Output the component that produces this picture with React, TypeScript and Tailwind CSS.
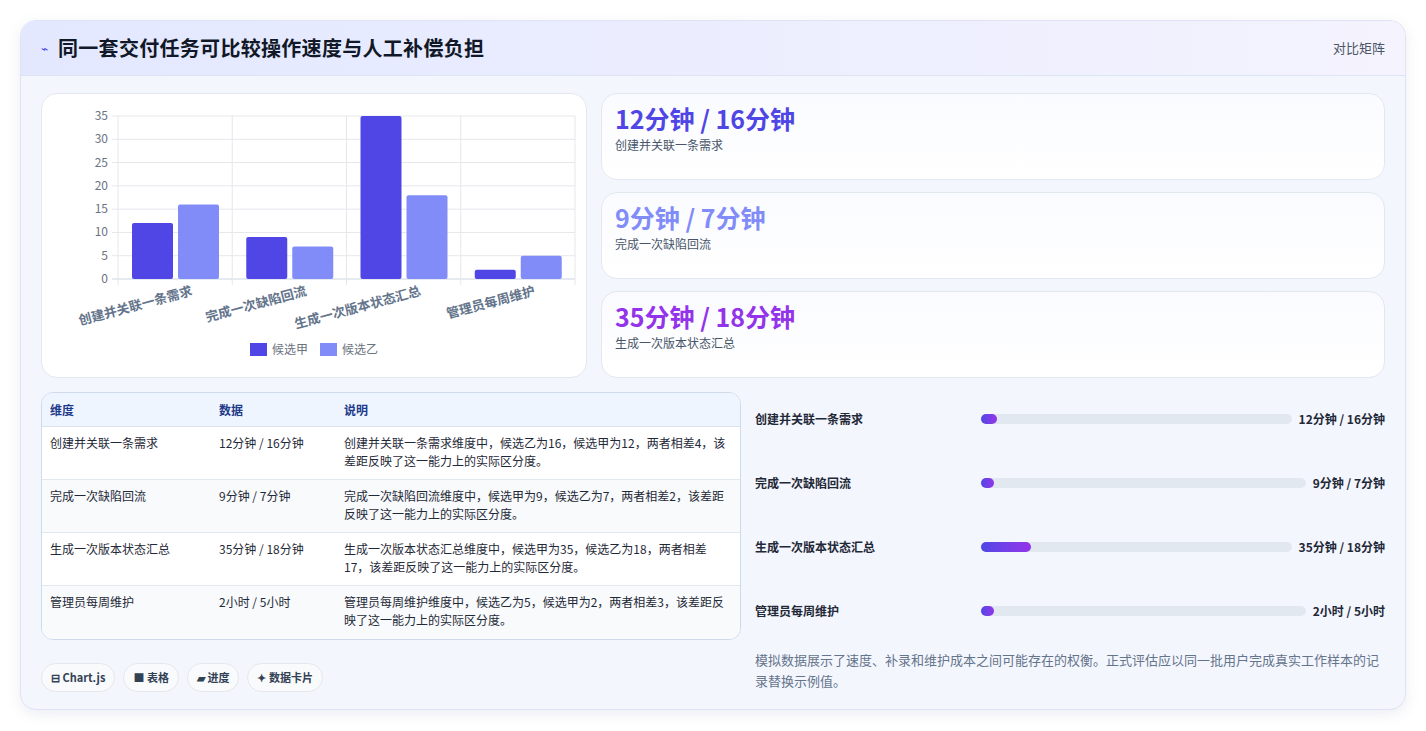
import React from "react";

const F = { fontFamily: '"Noto Sans CJK SC", "Noto Sans", sans-serif' };

const data = [
  { n: "创建并关联一条需求", a: 12, b: 16, d: "12分钟 / 16分钟", t: "创建并关联一条需求维度中，候选乙为16，候选甲为12，两者相差4，该差距反映了这一能力上的实际区分度。", w: 5 },
  { n: "完成一次缺陷回流", a: 9, b: 7, d: "9分钟 / 7分钟", t: "完成一次缺陷回流维度中，候选甲为9，候选乙为7，两者相差2，该差距反映了这一能力上的实际区分度。", w: 4 },
  { n: "生成一次版本状态汇总", a: 35, b: 18, d: "35分钟 / 18分钟", t: "生成一次版本状态汇总维度中，候选甲为35，候选乙为18，两者相差17，该差距反映了这一能力上的实际区分度。", w: 16 },
  { n: "管理员每周维护", a: 2, b: 5, d: "2小时 / 5小时", t: "管理员每周维护维度中，候选乙为5，候选甲为2，两者相差3，该差距反映了这一能力上的实际区分度。", w: 4 },
];

function Chart() {
  const L = 76, R = 533, T = 22, B = 185;
  const y = (v: number) => B - (v / 35) * (B - T);
  const cw = (R - L) / 4;
  return (
    <svg width="546" height="284" style={F}>
      {[0, 5, 10, 15, 20, 25, 30, 35].map((v) => (
        <g key={v}>
          <line x1={L - 6} x2={R} y1={y(v)} y2={y(v)} stroke={v === 0 ? "#cbd5e1" : "#e5e7eb"} />
          <text x={L - 10} y={y(v) + 4} fontSize="12" fill="#6b7280" textAnchor="end">{v}</text>
        </g>
      ))}
      {[0, 1, 2, 3, 4].map((i) => (
        <line key={i} x1={L + i * cw} x2={L + i * cw} y1={T} y2={B + 6} stroke="#e5e7eb" />
      ))}
      {data.map((d, i) => {
        const x0 = L + i * cw + 14;
        return (
          <g key={i}>
            <rect x={x0} y={y(d.a)} width="41" height={B - y(d.a)} rx="2" fill="#4f46e5" />
            <rect x={x0 + 46} y={y(d.b)} width="41" height={B - y(d.b)} rx="2" fill="#818cf8" />
            <text x={L + i * cw + cw / 2 + 18} y={B + 16} fontSize="13" fontWeight="600" fill="#64748b" textAnchor="end" transform={`rotate(-15 ${L + i * cw + cw / 2 + 18} ${B + 16})`}>{d.n}</text>
          </g>
        );
      })}
      <rect x="208" y="249" width="17" height="13" fill="#4f46e5" />
      <text x="230" y="260" fontSize="12" fill="#6b7280">候选甲</text>
      <rect x="278" y="249" width="17" height="13" fill="#818cf8" />
      <text x="300" y="260" fontSize="12" fill="#6b7280">候选乙</text>
    </svg>
  );
}

const metrics = [
  { v: "12分钟 / 16分钟", l: "创建并关联一条需求", c: "text-[#4f46e5]" },
  { v: "9分钟 / 7分钟", l: "完成一次缺陷回流", c: "text-[#818cf8]" },
  { v: "35分钟 / 18分钟", l: "生成一次版本状态汇总", c: "text-[#9333ea]" },
];

export default function App() {
  return (
    <div className="w-[1426px] h-[731px] bg-white p-5" style={F}>
      <div className="h-[690px] rounded-2xl border border-[#dfe3f5] bg-[#f4f6fe] overflow-hidden shadow-[0_4px_14px_rgba(100,110,160,0.12)] flex flex-col">
        <div className="h-[55px] shrink-0 flex items-center justify-between px-5 bg-gradient-to-r from-[#e3e8ff] to-[#f4f3fe] border-b border-[#dde4f5]">
          <div className="flex items-center gap-[10px]">
            <span className="text-[#4f46e5] text-[12px]">⌁</span>
            <span className="text-[20px] font-bold text-[#111827] tracking-[0.3px]">同一套交付任务可比较操作速度与人工补偿负担</span>
          </div>
          <span className="text-[13px] text-[#4b5563]">对比矩阵</span>
        </div>
        <div className="flex-1 px-5 pt-[17px] flex flex-col">
          <div className="flex gap-[14px] h-[285px]">
            <div className="w-[546px] shrink-0 bg-white rounded-2xl border border-[#e2e8f0]">
              <Chart />
            </div>
            <div className="flex-1 flex flex-col gap-[12px]">
              {metrics.map((m) => (
                <div key={m.v} className="flex-1 rounded-2xl border border-[#e2e8f0] bg-gradient-to-b from-[#fafbff] to-white px-[13px] pt-[6px]">
                  <div className={`text-[25px] font-bold leading-[36px] ${m.c}`}>{m.v}</div>
                  <div className="text-[12px] text-[#475569]">{m.l}</div>
                </div>
              ))}
            </div>
          </div>
          <div className="flex gap-[14px] mt-[14px]">
            <div className="w-[700px] shrink-0">
              <div className="rounded-xl border border-[#cfdbea] overflow-hidden bg-[#fafcff] text-[12px] text-[#1f2937]">
                <div className="flex bg-[#eef5ff] h-[34px] items-center font-semibold text-[#1e3a8a] border-b border-[#dbe3ee]">
                  <div className="w-[177px] pl-2">维度</div>
                  <div className="w-[125px]">数据</div>
                  <div className="flex-1">说明</div>
                </div>
                {data.map((d, i) => (
                  <div key={i} className={`flex py-[7px] h-[53px] ${i < 3 ? "border-b border-[#e2e8f0]" : ""} ${i % 2 ? "bg-[#f8fafc]" : "bg-white"}`}>
                    <div className="w-[177px] pl-2 leading-[18px]">{d.n}</div>
                    <div className="w-[125px] leading-[18px]">{d.d}</div>
                    <div className="flex-1 pr-3 leading-[18px]">{d.t}</div>
                  </div>
                ))}
              </div>
              <div className="flex gap-2 mt-[23px]">
                {["⊟ Chart.js", "■ 表格", "▰ 进度", "✦ 数据卡片"].map((c) => (
                  <span key={c} className="h-[29px] flex items-center px-[9px] rounded-full border border-[#e5e7eb] bg-[#f9fafb] text-[11px] font-semibold text-[#334155]">{c}</span>
                ))}
              </div>
            </div>
            <div className="flex-1 flex flex-col">
              <div className="flex flex-col -mt-[5px]">
                {data.map((d, i) => (
                  <div key={i} className="flex items-center h-[64px] text-[12px] font-semibold text-[#1f2937]">
                    <div className="w-[226px] shrink-0">{d.n}</div>
                    <div className="flex-1 h-[10px] rounded-full bg-[#e2e8f0] mr-[7px]">
                      <div className="h-full rounded-full bg-gradient-to-r from-[#4f46e5] to-[#9333ea]" style={{ width: d.w + "%" }} />
                    </div>
                    <div className="whitespace-nowrap">{d.d}</div>
                  </div>
                ))}
              </div>
              <p className="mt-[6px] text-[13px] leading-[21px] text-[#64748b]">模拟数据展示了速度、补录和维护成本之间可能存在的权衡。正式评估应以同一批用户完成真实工作样本的记录替换示例值。</p>
            </div>
          </div>
        </div>
      </div>
    </div>
  );
}
